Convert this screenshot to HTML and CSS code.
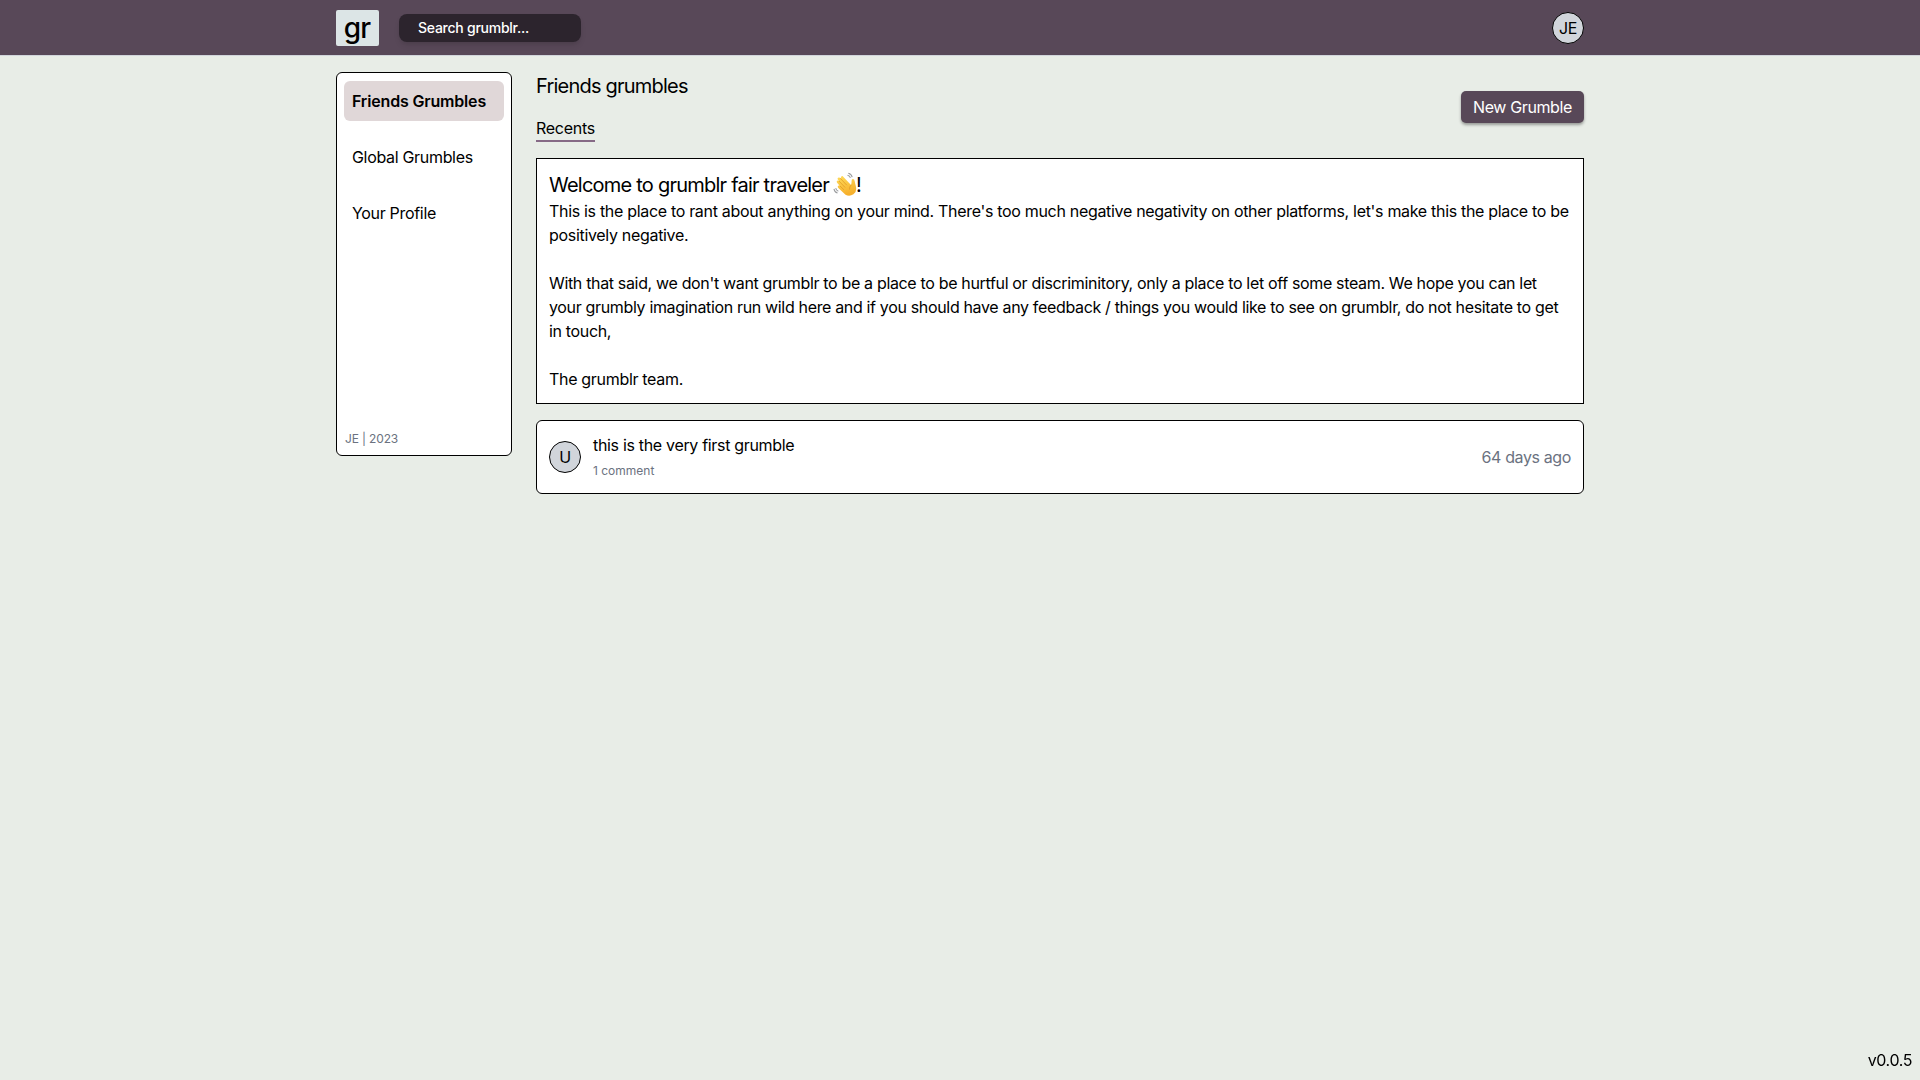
FILE: index.html
```
<!DOCTYPE html>
<html lang="en">
<head>
<meta charset="utf-8">
<title>grumblr</title>
<link rel="stylesheet" href="styles.css">
</head>
<body>
<header class="topbar">
  <div class="container topbar-inner">
    <div class="topbar-left">
      <a class="logo">gr</a>
      <div class="search">Search grumblr...</div>
    </div>
    <div class="avatar">JE</div>
  </div>
</header>
<div class="container layout">
  <aside class="sidebar">
    <nav class="nav">
      <a class="nav-item active">Friends Grumbles</a>
      <a class="nav-item">Global Grumbles</a>
      <a class="nav-item">Your Profile</a>
    </nav>
    <footer class="credit">JE | 2023</footer>
  </aside>
  <main class="feed">
    <div class="feed-head">
      <div class="feed-titles">
        <h1 class="title">Friends grumbles</h1>
        <span class="tab">Recents</span>
      </div>
      <button class="new-button">New Grumble</button>
    </div>
    <section class="welcome">
      <h2 class="welcome-title"><span>Welcome to grumblr fair traveler</span>
        <svg class="wave" viewBox="0 0 23 23" aria-label="waving hand">
          <defs><linearGradient id="skin" x1="0" y1="0" x2="0.3" y2="1"><stop offset="0" stop-color="#ffdc5a"/><stop offset="1" stop-color="#f6b02c"/></linearGradient></defs>
          <path d="M14.7 1.3q3 .8 3.7 3.6M13.9 3.2q2.2.5 2.8 2.5M.9 16.1q.5 3.1 3.4 4M2.6 15.5q.4 2.2 2.5 2.9" fill="none" stroke="#999b9e" stroke-width="1"/>
          <path d="M12 21.7 5.1 15.3Q4 14 5 13.2q.7-.5 1.7.2L4.1 10.5q-1-1.2-.1-2 .8-.7 1.9.4L4.8 7.5q-.9-1.2.1-2 .9-.7 1.9.4l1 1-.3-1.6q0-1.1.9-1.3.9-.3 1.6.7l7.3 7.8q.6-2.1.5-3.9 0-1.8 1.3-1.9 1.4 0 1.7 2.1.4 2.1 1 4.4 1.5 5.7-2.2 8.2-4.1 2.6-7.6.3Z" fill="url(#skin)"/>
          <path d="m6.8 5.9 6.2 6.5M5.9 8.9l5.5 5.7M6.7 13.4l3.5 3.4M17.3 12.5q-1.7 1.5-1.5 4" fill="none" stroke="#df9823" stroke-width=".7" stroke-linecap="round"/>
        </svg><span>!</span></h2>
      <p class="copy">This is the place to rant about anything on your mind. There's too much negative negativity on other platforms, let's make this the place to be positively negative.</p>
      <p class="copy tight">With that said, we don't want grumblr to be a place to be hurtful or discriminitory, only a place to let off some steam. We hope you can let your grumbly imagination run wild here and if you should have any feedback / things you would like to see on grumblr, do not hesitate to get in touch,</p>
      <p class="copy">The grumblr team.</p>
    </section>
    <article class="post">
      <div class="avatar">U</div>
      <div class="post-body">
        <div>this is the very first grumble</div>
        <div class="comments">1 comment</div>
      </div>
      <time class="age">64 days ago</time>
    </article>
  </main>
</div>
<div class="version">v0.0.5</div>
</body>
</html>
```
FILE: styles.css
```
* { box-sizing: border-box; margin: 0; padding: 0; }
body {
  min-height: 100vh;
  background: #e8ede7;
  color: #000;
  font: 400 16px/24px Inter, "Liberation Sans", sans-serif;
  letter-spacing: -0.32px;
}
.container { width: 1248px; margin: 0 auto; }

.topbar { height: 56px; background: #584858; border-bottom: 1px solid #d1d5db; }
.topbar-inner { display: flex; justify-content: space-between; align-items: center; height: 56px; }
.topbar-left { display: flex; align-items: center; gap: 20px; }
.logo {
  width: 43px; height: 36px;
  padding-right: 1px;
  border-radius: 2px;
  background: #dce5e6;
  font-size: 28px; font-weight: 500; line-height: 36px; text-align: center;
  letter-spacing: -0.9px;
}
.search {
  width: 182px; height: 28px;
  padding-left: 19px;
  border-radius: 8px;
  background: #2c242d;
  color: #fff;
  font-size: 14px; font-weight: 500; line-height: 28px;
  letter-spacing: -0.25px;
  box-shadow: 0 4px 6px -1px rgba(0, 0, 0, .1), 0 2px 4px -2px rgba(0, 0, 0, .1);
}
.avatar {
  flex: none;
  width: 32px; height: 32px;
  border: 1px solid #000; border-radius: 50%;
  background: #d1d5db;
  line-height: 30px; text-align: center;
}

.layout { display: flex; align-items: flex-start; gap: 24px; padding-top: 16px; }
.sidebar {
  display: flex; flex-direction: column; justify-content: space-between;
  width: 176px; height: 384px;
  padding: 8px 7px;
  border: 1px solid #000; border-radius: 6px;
  background: #fff;
}
.nav { display: flex; flex-direction: column; gap: 16px; }
.nav-item { padding: 8px; border-radius: 6px; }
.nav-item.active { background: #e0d7d8; font-weight: 600; letter-spacing: -0.17px; }
.credit { padding-left: 1px; color: #6b7280; font-size: 12px; line-height: 16px; letter-spacing: -0.15px; }

.feed { width: 1048px; }
.feed-head { display: flex; justify-content: space-between; align-items: center; margin-bottom: 16px; }
.feed-titles { display: flex; flex-direction: column; align-items: flex-start; gap: 16px; }
.title { font-size: 20px; font-weight: 400; line-height: 28px; letter-spacing: -0.78px; }
.tab { border-bottom: 2px solid #866a86; letter-spacing: -0.26px; }
.new-button {
  width: 123px; height: 32px;
  border: 0; border-radius: 5px;
  background: #584858;
  color: #fff;
  font: inherit; letter-spacing: -0.38px;
  box-shadow: 0 2px 3px rgba(0, 0, 0, .35);
}
.welcome { padding: 12px; border: 1px solid #000; background: #fff; }
.welcome-title { display: flex; align-items: center; font-size: 20px; font-weight: 400; line-height: 28px; letter-spacing: -0.77px; }
.wave { width: 24px; height: 24px; margin: 0 -1px 2px 4px; }
.copy + .copy { margin-top: 24px; }
.copy { letter-spacing: -0.314px; }
.copy.tight { letter-spacing: -0.339px; }
.post {
  display: flex; align-items: center; gap: 12px;
  height: 74px; margin-top: 16px; padding: 12px;
  border: 1px solid #000; border-radius: 6px;
  background: #fff;
}
.post-body { flex: 1; height: 48px; }
.comments { margin-top: 6px; color: #6b7280; font-size: 12px; line-height: 16px; letter-spacing: 0; }
.age { color: #6b7280; letter-spacing: -0.38px; }
.version { position: fixed; right: 8px; bottom: 8px; letter-spacing: -0.4px; }
```
